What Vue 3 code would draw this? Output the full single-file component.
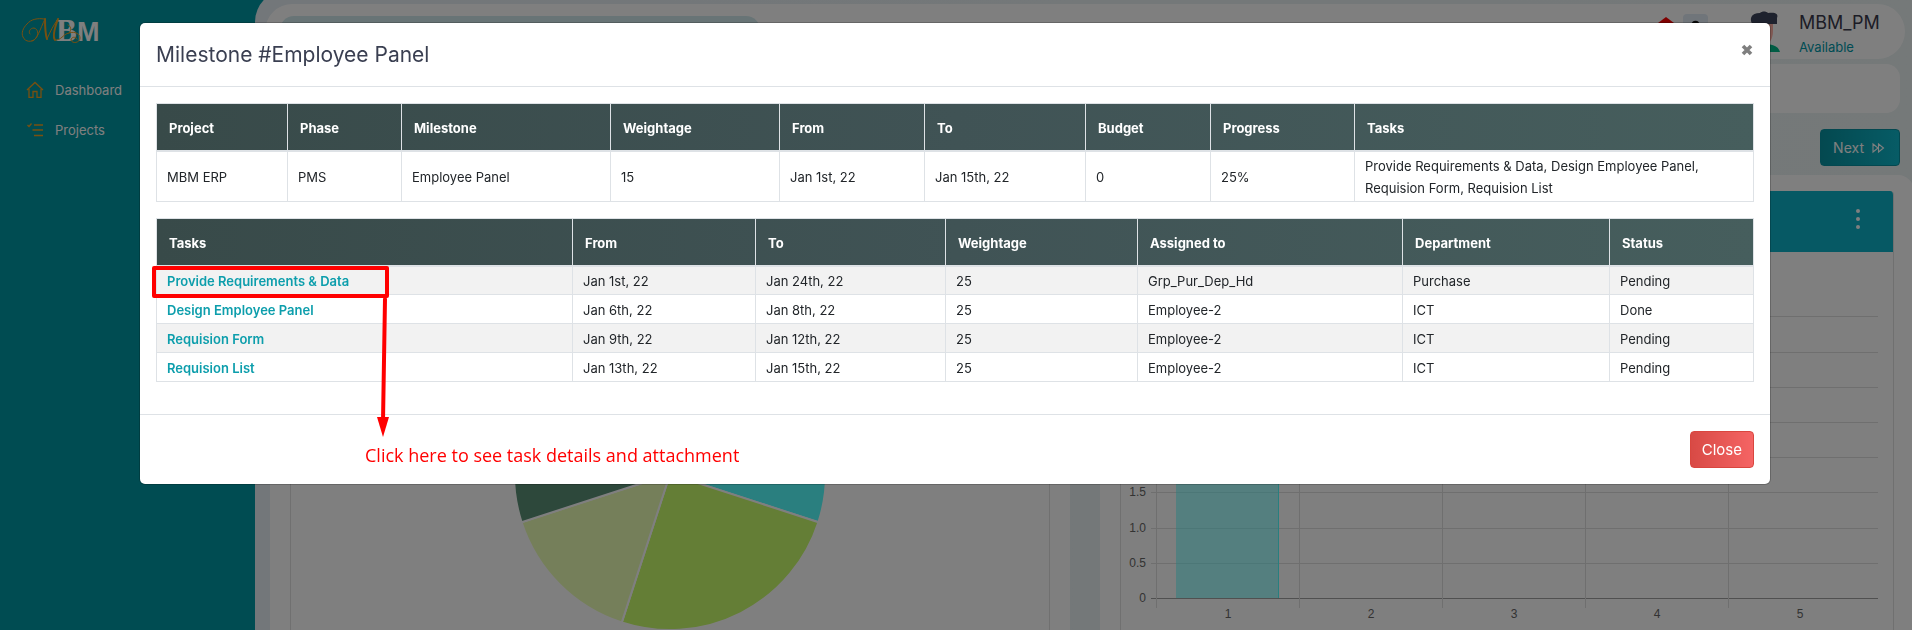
<script setup>
import { computed } from 'vue'

const summary = {
  columns: [
    { label: 'Project', size: 131 },
    { label: 'Phase', size: 114 },
    { label: 'Milestone', size: 209 },
    { label: 'Weightage', size: 169 },
    { label: 'From', size: 145 },
    { label: 'To', size: 161 },
    { label: 'Budget', size: 125 },
    { label: 'Progress', size: 144 },
    { label: 'Tasks', size: 399 },
  ],
  row: [
    'MBM ERP', 'PMS', 'Employee Panel', '15', 'Jan 1st, 22', 'Jan 15th, 22', '0', '25%',
    'Provide Requirements & Data, Design Employee Panel, Requision Form, Requision List',
  ],
}

const taskColumns = [
  { label: 'Tasks', size: 416 },
  { label: 'From', size: 183 },
  { label: 'To', size: 190 },
  { label: 'Weightage', size: 192 },
  { label: 'Assigned to', size: 265 },
  { label: 'Department', size: 207 },
  { label: 'Status', size: 144 },
]

const tasks = [
  { name: 'Provide Requirements & Data', cells: ['Jan 1st, 22', 'Jan 24th, 22', '25', 'Grp_Pur_Dep_Hd', 'Purchase', 'Pending'] },
  { name: 'Design Employee Panel', cells: ['Jan 6th, 22', 'Jan 8th, 22', '25', 'Employee-2', 'ICT', 'Done'] },
  { name: 'Requision Form', cells: ['Jan 9th, 22', 'Jan 12th, 22', '25', 'Employee-2', 'ICT', 'Pending'] },
  { name: 'Requision List', cells: ['Jan 13th, 22', 'Jan 15th, 22', '25', 'Employee-2', 'ICT', 'Pending'] },
]

const share = (columns) => {
  const total = columns.reduce((sum, c) => sum + c.size, 0)
  return columns.map((c) => ({ width: `${(c.size / total) * 100}%` }))
}
const summaryWidths = computed(() => share(summary.columns))
const taskWidths = computed(() => share(taskColumns))

const gridRows = Array.from({ length: 9 }, (_, i) => ({
  y: 347 - Math.round(i * 35.2),
  label: i === 0 ? '0' : (i * 0.5).toFixed(1),
}))
const gridCols = [1, 2, 3, 4, 5].map((n) => ({ n, x: 35 + (n - 1) * 143 }))
</script>

<template>
  <div class="app">
    <aside class="sidebar">
      <svg class="logo" viewBox="0 0 80 30" role="img" aria-label="MBM">
        <text class="logo-b" x="35" y="26">B</text>
        <text class="logo-m" x="56" y="26">M</text>
        <g fill="none" stroke="#f0a020" stroke-linecap="round" stroke-linejoin="round">
          <path stroke-width="1" d="M23 4C17 3 10 4 6 9 2 13 0 18 2 22c2 5 9 6 13 1 3-4 2-9-2-10-4 0-6 4-4 6" />
          <path stroke-width="1" d="M11 26c5 0 8-12 13-22M26 24C29 17 33 9 37 4" />
          <path stroke-width="2" d="M24 4c0 8 0 14 2 20M37 4c-3 8-6 17-3 21" />
          <path stroke-width="1" d="M34 25c6 1 8-6 14-7 6-2 11 1 11 5 0 5-8 6-9 2 0-3 5-4 6-1M48 18c3-3 2-7-1-8" />
        </g>
      </svg>
      <nav class="menu">
        <a href="#dashboard">
          <svg viewBox="0 0 18 18" fill="none" stroke="#f0a020" stroke-width="1.3">
            <path d="M1 9 9 1.500l8 7.500M3 8v8.300h4V10.500h4v5.800h4V8" />
          </svg>
          Dashboard
        </a>
        <a href="#projects">
          <svg viewBox="0 0 18 18" fill="none" stroke="#f0a020" stroke-width="1.3">
            <path d="M1.500 4 3 5.500 5.500 2.500M8 4h9M6.500 9H17M8 14.500h9" />
          </svg>
          Projects
        </a>
      </nav>
    </aside>

    <main class="content">
      <header class="navbar">
        <input class="search" type="search" aria-label="Search">
        <div class="user">
          <svg class="home-icon" viewBox="0 0 16 20"><path fill="red" d="M8 1 16 7H0z" /></svg>
          <button class="profile-icon" type="button" aria-label="Profile">
            <svg viewBox="0 0 26 26"><circle cx="13" cy="11" r="4" fill="#111" /></svg>
          </button>
          <svg class="avatar" viewBox="0 0 40 42">
            <path fill="#ffb0a5" d="M10 8h20v12c0 8-4 14-9 14s-11-6-11-14z" />
            <path fill="#00b888" d="M2 41c4-7 10-8 18-8s15 1 17 8z" />
            <path fill="#3d445c" d="M11 16C5 8 8 2 17 2c2-2 6-2 8 0 6-1 11 0 9 5v6H14z" />
          </svg>
          <div class="who">
            <div class="who-name">MBM_PM</div>
            <div class="who-state">Available</div>
          </div>
        </div>
      </header>

      <div class="crumbs"></div>

      <div class="actions">
        <button class="next" type="button">
          Next
          <svg viewBox="0 0 14 12" fill="none" stroke="#fff" stroke-width="1.100">
            <path d="M2 2v8l5-4zM7.500 2v8l5-4z" />
          </svg>
        </button>
      </div>

      <div class="charts">
        <section class="panel">
          <div class="card">
            <div class="card-head"></div>
            <svg class="chart" viewBox="0 0 758 380">
              <g stroke="#fff" stroke-width="2">
                <path fill="#54fffe" d="M379 222V66A156 156 0 0 1 527.400 270.200z" />
                <path fill="#c8fc6c" d="M379 222 527.400 270.200A156 156 0 0 1 330.800 370.400z" />
                <path fill="#eaffb4" d="M379 222 330.800 370.400A156 156 0 0 1 230.600 270.200z" />
                <path fill="#5a9076" d="M379 222 230.600 270.200A156 156 0 0 1 379 66z" />
              </g>
            </svg>
          </div>
        </section>
        <section class="panel">
          <div class="card">
            <div class="card-head">
              <button class="dots" type="button" aria-label="More">
                <svg viewBox="0 0 6 22" fill="#fff">
                  <circle cx="3" cy="3" r="2" /><circle cx="3" cy="11" r="2" /><circle cx="3" cy="19" r="2" />
                </svg>
              </button>
            </div>
            <svg class="chart" viewBox="0 0 772 380">
              <g class="grid-lines">
                <path v-for="r in gridRows" :key="r.label" :class="{ axis: r.y === 347 }" :d="`M30 ${r.y - 0.5}H757`" />
                <path v-for="c in gridCols" :key="c.n" :d="`M${c.x + 0.5} 30V356`" />
              </g>
              <path fill="rgba(84,255,254,.5)" d="M55 30h103v316H55z" />
              <path stroke="#50ffff" fill="none" d="M157.500 30v316" />
              <g class="labels">
                <text v-for="r in gridRows" :key="r.label" x="25" :y="r.y + 3" text-anchor="end">{{ r.label }}</text>
                <text v-for="c in gridCols" :key="c.n" :x="c.x + 72" y="366" text-anchor="middle">{{ c.n }}</text>
              </g>
            </svg>
          </div>
        </section>
      </div>
    </main>

    <div class="backdrop">
      <div class="modal" role="dialog" aria-modal="true" aria-labelledby="modal-title">
        <header class="modal-head">
          <h1 id="modal-title">Milestone #Employee Panel</h1>
          <button class="dismiss" type="button" aria-label="Dismiss">
            <svg viewBox="0 0 12 12"><path d="M2 2l8 8M10 2l-8 8" stroke="#7f7f7f" stroke-width="3.600" /></svg>
          </button>
        </header>

        <div class="modal-body">
          <table class="summary">
            <colgroup><col v-for="(w, i) in summaryWidths" :key="i" :style="w"></colgroup>
            <thead>
              <tr><th v-for="c in summary.columns" :key="c.label" scope="col">{{ c.label }}</th></tr>
            </thead>
            <tbody>
              <tr><td v-for="(v, i) in summary.row" :key="i">{{ v }}</td></tr>
            </tbody>
          </table>

          <table class="tasks">
            <colgroup><col v-for="(w, i) in taskWidths" :key="i" :style="w"></colgroup>
            <thead>
              <tr><th v-for="c in taskColumns" :key="c.label" scope="col">{{ c.label }}</th></tr>
            </thead>
            <tbody>
              <tr v-for="t in tasks" :key="t.name">
                <td><a href="#task">{{ t.name }}</a></td>
                <td v-for="(v, i) in t.cells" :key="i">{{ v }}</td>
              </tr>
            </tbody>
          </table>
        </div>

        <footer class="modal-foot">
          <button class="close" type="button">Close</button>
        </footer>

        <svg class="callout" viewBox="0 0 240 174" aria-hidden="true">
          <rect x="2" y="4" width="233" height="28" fill="none" stroke="red" stroke-width="4" stroke-linejoin="round" />
          <path d="M233 35 231 157" stroke="red" stroke-width="4" stroke-linecap="round" />
          <path d="M225 153h12l-6 20z" fill="red" />
        </svg>
        <p class="callout-text">Click here to see task details and attachment</p>
      </div>
    </div>
  </div>
</template>

<style>
html, body { margin: 0; overflow: hidden; }
</style>

<style scoped>
* { box-sizing: border-box; }
button { font: inherit; border: 0; padding: 0; background: none; cursor: pointer; }
svg { display: block; }

.app {
  display: flex;
  height: 100vh;
  overflow: hidden;
  background: #0098a4;
  font-family: Inter, "Noto Sans", sans-serif;
  font-size: 13px;
  color: #212529;
}

.sidebar { width: 255px; flex: none; padding: 15px 21px; }
.logo { width: 80px; height: 30px; overflow: visible; }
.logo-b { font: bold 31px "Liberation Serif", serif; fill: #fff; }
.logo-m { font: bold 27px "Liberation Sans", sans-serif; fill: #fff; }
.menu { display: flex; flex-direction: column; gap: 20px; margin-top: 35px; }
.menu a { display: flex; align-items: center; gap: 11px; padding-left: 5px; height: 20px; color: #fff; text-decoration: none; }
.menu svg { width: 18px; height: 18px; }

.content {
  flex: 1;
  min-width: 0;
  margin-top: -10px;
  padding-top: 14px;
  border-top-left-radius: 32px;
  background: linear-gradient(90deg, #e6eef4, #eaf2f2);
}
.navbar {
  display: flex;
  justify-content: space-between;
  height: 55px;
  margin: 0 7px 0 10px;
  padding: 0 26px 0 15px;
  border-radius: 28px;
  background: #fff;
}
.search { width: 480px; height: 32px; margin-top: 12px; border: 0; border-radius: 14px; background: #d0e9ec; }
.user { display: flex; align-items: flex-start; }
.home-icon { width: 16px; height: 20px; margin: 12px 9px 0 0; }
.profile-icon { width: 25px; height: 25px; margin: 10px 35px 0 0; border-radius: 4px; background: #e0eaf4; }
.avatar { width: 40px; height: 42px; margin: 7px 16px 0 0; }
.who { width: 80px; }
.who-name { margin-top: 7px; font-size: 18px; line-height: 24px; color: #3a3a4c; }
.who-state { margin-top: 2px; line-height: 20px; color: #0098a8; }

.crumbs { height: 49px; margin: 5px 12px 0 15px; border-radius: 14px; background: #fff; }
.actions { display: flex; justify-content: flex-end; padding: 16px 12px 0; }
.next {
  display: flex;
  align-items: center;
  gap: 7px;
  height: 37px;
  padding: 0 14px 0 12px;
  border: 1px solid #0890a0;
  border-radius: 4px;
  background: linear-gradient(90deg, #0892a0, #0eb8cc);
  color: #fff;
  font-size: 14px;
}
.next svg { width: 14px; height: 12px; }

.charts { display: grid; grid-template-columns: 800fr 814fr; gap: 30px; margin: 9px -2px 0 15px; }
.panel { min-width: 0; padding: 16px 20px 40px; border-radius: 16px; background: #fff; }
.card { border: 1px solid #e0e0e0; border-top: 0; border-radius: 4px; overflow: hidden; }
.card-head {
  display: flex;
  justify-content: flex-end;
  align-items: center;
  height: 61px;
  padding: 0 32px;
  background: #0cb2c8;
}
.dots { width: 6px; height: 22px; margin-top: -6px; }
.chart { width: 100%; height: auto; }
.grid-lines path { fill: none; stroke: #dedede; }
.grid-lines .axis { stroke: #a0a0a0; }
.labels text { font: 12px "Liberation Sans", sans-serif; fill: #666; }

.backdrop { position: fixed; inset: 0; padding: 23px 142px 0 140px; background: rgba(0, 0, 0, .5); }
.modal { position: relative; border-radius: 5px; background: #fff; box-shadow: 0 0 0 1px rgba(0, 0, 0, .2); }
.modal-head {
  display: flex;
  justify-content: space-between;
  align-items: flex-start;
  padding: 16px;
  border-bottom: 1px solid #dee2e6;
}
h1 { margin: 0; padding-top: 1px; font-size: 21px; font-weight: 400; line-height: 30px; color: #3a3f51; }
.dismiss { width: 12px; height: 12px; margin: 5px 1px 0 0; }
.dismiss svg { width: 12px; height: 12px; }

.modal-body { padding: 16px 16px 32px; }
table { width: 100%; table-layout: fixed; border-collapse: collapse; }
.summary { margin-bottom: 16px; }
thead tr { background: linear-gradient(90deg, #384a49, #405355 50%, #465e5d); }
th, td { border: 1px solid #dee2e6; text-align: left; }
th { height: 47px; padding: 2px 12px 0; border-bottom-width: 2px; font-weight: 700; color: #fff; }
td { height: 29px; padding: 1px 10px 0; }
.summary td { height: 51px; line-height: 22px; }
.tasks tbody tr:nth-child(odd) { background: #f2f2f2; }
.tasks a { color: #0d9eac; font-weight: 600; text-decoration: none; }

.modal-foot { display: flex; justify-content: flex-end; padding: 16px; border-top: 1px solid #dee2e6; }
.close {
  height: 37px;
  padding: 0 11px;
  border: 1px solid #d9463f;
  border-radius: 4px;
  background: linear-gradient(90deg, #d84a45, #f56464);
  color: #fff;
  font-size: 15px;
}

.callout { position: absolute; left: 12px; top: 241px; width: 240px; height: 174px; }
.callout-text {
  position: absolute;
  left: 225px;
  top: 420px;
  margin: 0;
  font: 18px/24px "Open Sans", sans-serif;
  color: #f00;
  white-space: nowrap;
}
</style>
